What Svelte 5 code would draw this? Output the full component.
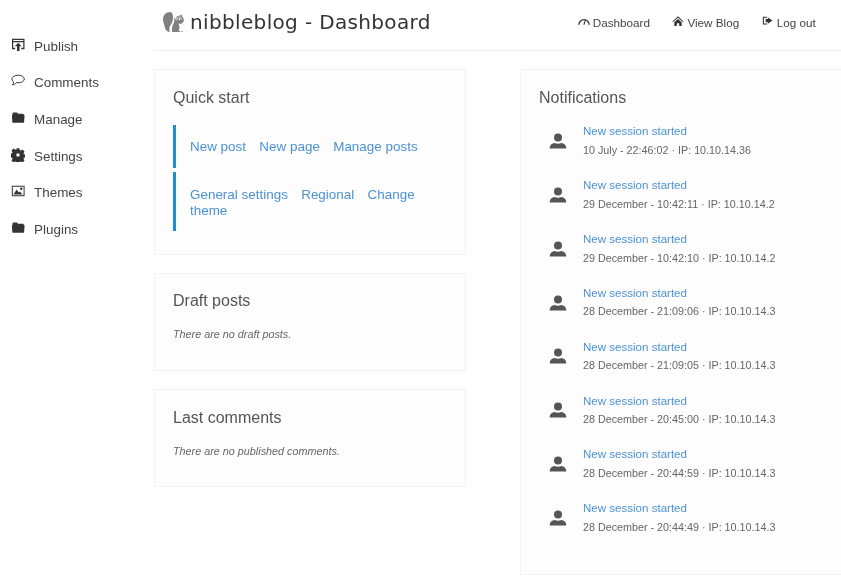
<script>
	const menu = [
		{ label: 'Publish', icon: 'publish' },
		{ label: 'Comments', icon: 'comment' },
		{ label: 'Manage', icon: 'folder' },
		{ label: 'Settings', icon: 'gear' },
		{ label: 'Themes', icon: 'image' },
		{ label: 'Plugins', icon: 'folder' }
	];

	const notifications = [
		'10 July - 22:46:02 · IP: 10.10.14.36',
		'29 December - 10:42:11 · IP: 10.10.14.2',
		'29 December - 10:42:10 · IP: 10.10.14.2',
		'28 December - 21:09:06 · IP: 10.10.14.3',
		'28 December - 21:09:05 · IP: 10.10.14.3',
		'28 December - 20:45:00 · IP: 10.10.14.3',
		'28 December - 20:44:59 · IP: 10.10.14.3',
		'28 December - 20:44:49 · IP: 10.10.14.3'
	];
</script>

{#snippet icon(name)}
	<svg class="icon" viewBox="0 0 14 14" aria-hidden="true">
		{#if name === 'publish'}
			<path d="M1 .8h12.500v10.400H10.300V9.800h2V4.200H2.200v5.600h2v1.400H1zM2.200 2v1h10.100V2z" />
			<path d="M7.200 4.800l3.300 3.500H8.500v4.700H6v-4.700H3.900z" />
		{:else if name === 'comment'}
			<path class="line" d="M7.300 1.200c3.300 0 6 1.700 6 3.800S10.600 8.800 7.300 8.800c-.7 0-1.300-.1-1.900-.2C4.600 9.900 3.100 10.700 1.500 11c.7-.8 1.100-1.700 1.100-3C1.500 7.300 1 6.300 1 5c0-2.100 3-3.800 6.300-3.800z" />
		{:else if name === 'folder'}
			<path d="M2 1.500h4l1 1.300h5.300l.7 1.400H1.500V2.500zM.9 4.200h12.700l-.5 6.900c0 .4-.3.700-.7.700H2c-.4 0-.7-.3-.7-.7z" />
		{:else if name === 'gear'}
			<path fill-rule="evenodd" d="M5.600.3h2.800l.4 1.900 1 .4 1.700-1 2 2-1 1.600.4 1 1.900.4v2.800l-1.900.4-.4 1 1 1.700-2 2-1.700-1-1 .4-.4 1.900H5.600l-.4-1.900-1-.4-1.700 1-2-2 1-1.700-.4-1-1.900-.4V5.600l1.900-.4.400-1-1-1.600 2-2 1.700 1 1 .4zM7 5.200a1.800 1.800 0 1 0 0 3.600 1.800 1.800 0 0 0 0-3.600z" />
		{:else if name === 'image'}
			<path fill-rule="evenodd" d="M.8 1.800h12.800v10.400H.8zM1.800 2.800v8.400h10.800V2.800z" />
			<path d="M2.500 10.500l3.200-5 2 3 1-1 3 3z" />
			<circle cx="10.300" cy="4.700" r="1.200" />
		{/if}
	</svg>
{/snippet}

<div class="page">
	<aside class="sidebar">
		<ul>
			{#each menu as item}
				<li>{@render icon(item.icon)}<span>{item.label}</span></li>
			{/each}
		</ul>
	</aside>

	<main class="main">
		<header class="topbar">
			<h1>
				<svg class="logo" viewBox="0 0 22 22" aria-hidden="true">
					<path d="M8.500 1C3.500 1 1 4.500 1 8.500c0 3 1.500 5 1.800 7.500.3 2.500 1.700 4.500 5.200 5.200-.9-2-.9-4-.1-6C9.500 13 11 10 11 7c0-3-.2-5-2.500-6z" />
					<path d="M12.500 6c-.2 2.500-.2 3.500-.3 5-1.500 3-3 6-2 10h7.500c.6 0 .8-.6.400-1l-1.600-.6c1-1.500 1.300-3.200.7-5-.3-.8-.6-1.300-.9-1.800 1.600.5 3 .3 4.200-.7 1.200-1 1.700-2.600 1.100-4.100-.3-1-.9-1.800-1.300-2.400L20 3.400l-1.600 1.100c-1.700-.4-3.500.3-4 1.800-.3 1-.2 2 .1 3.100-.9-.9-1.500-2.100-2-3.400z" />
					<path class="ring" d="M15 9.500c-.6-2 .6-3.700 2.400-3.700 1.500 0 2.600 1.200 2.300 2.700" />
					<circle class="eye" cx="17.600" cy="8" r=".9" />
					<path d="M19.500 20h1.300v1h-1.300z" />
				</svg>
				<span>nibbleblog - Dashboard</span>
			</h1>
			<nav>
				<span class="link">
					<svg class="icon small" viewBox="0 0 14 14" aria-hidden="true">
						<path class="line thick" d="M1 11.500A6 6 0 0 1 13 11.500" />
						<path d="M6.200 11L8.400 5l.8.300-1.500 6z" />
					</svg>Dashboard
				</span>
				<span class="link">
					<svg class="icon small" viewBox="0 0 14 14" aria-hidden="true">
						<path d="M7 1.500l6.500 6-.8.8L7 3.200 1.300 8.300l-.8-.8zM2.700 8.500L7 4.600l4.300 3.900v4.300H8.400V9.500H5.600v3.300H2.700z" />
					</svg>View Blog
				</span>
				<span class="link">
					<svg class="icon small wide" viewBox="0 0 14 14" aria-hidden="true">
						<path d="M1 1.500h5.500v1.300H2.400v7.400h4.100v1.300H1z" />
						<path d="M7.500 2.500l5.800 4-5.800 4V8.500H4.700v-4h2.800z" />
					</svg>Log out
				</span>
			</nav>
		</header>

		<div class="columns">
			<div class="left">
				<section class="box">
					<h2>Quick start</h2>
					<div class="quick">
						<a href="#a">New post</a>
						<a href="#a">New page</a>
						<a href="#a">Manage posts</a>
					</div>
					<div class="quick second">
						<a href="#a">General settings</a>
						<a href="#a">Regional</a>
						<a href="#a">Change theme</a>
					</div>
				</section>

				<section class="box draft">
					<h2>Draft posts</h2>
					<p class="empty">There are no draft posts.</p>
				</section>

				<section class="box">
					<h2>Last comments</h2>
					<p class="empty">There are no published comments.</p>
				</section>
			</div>

			<section class="box right">
				<h2>Notifications</h2>
				{#each notifications as text}
					<div class="note">
						<svg class="person" viewBox="0 0 18 18" aria-hidden="true">
							<circle cx="9" cy="5.500" r="4" />
							<path d="M.7 16.500c0-3.400 2.300-5.300 5-5.500 1.800 1 4.800 1 6.600 0 2.700.2 5 2.100 5 5.500z" />
						</svg>
						<div>
							<a href="#a">New session started</a>
							<p>{text}</p>
						</div>
					</div>
				{/each}
			</section>
		</div>
	</main>
</div>

<style>
	:global(body) {
		margin: 0;
		background: #fff;
		font-family: 'Liberation Sans', Arial, sans-serif;
		color: #444;
		overflow: hidden;
	}

	.page {
		display: flex;
		width: 841px;
		height: 576px;
		overflow: hidden;
		will-change: opacity;
	}

	.sidebar {
		flex: 0 0 154px;
	}

	.sidebar ul {
		list-style: none;
		margin: 0;
		padding: 28px 0 0 11px;
	}

	.sidebar li {
		display: flex;
		align-items: center;
		height: 36.600px;
		font-size: 13.440px;
		color: #444;
	}

	.sidebar li span {
		margin-left: 9px;
	}

	.icon {
		width: 14px;
		height: 14px;
		fill: #333;
		flex: none;
		margin-top: -3px;
	}

	.icon .line {
		fill: none;
		stroke: #333;
		stroke-width: 1;
	}

	.icon .line.thick {
		stroke-width: 1.500;
	}

	.icon.small {
		width: 12px;
		height: 12px;
		margin: 0 3px 0 0;
		vertical-align: -0.500px;
	}

	.icon.small.wide {
		width: 11px;
		margin-right: 4px;
	}

	.main {
		flex: 1;
		min-width: 0;
	}

	.topbar {
		display: flex;
		justify-content: space-between;
		align-items: center;
		height: 44px;
		padding-bottom: 6px;
		border-bottom: 1px solid #eee;
	}

	h1 {
		display: flex;
		align-items: center;
		margin: 0 0 0 8px;
		font: 400 20px 'DejaVu Sans', sans-serif;
		letter-spacing: 0.350px;
		color: #333;
	}

	.logo {
		width: 22px;
		height: 22px;
		fill: #808080;
		margin-right: 6px;
	}

	.logo .eye {
		fill: #fff;
	}

	.logo .ring {
		fill: none;
		stroke: #e4e4e4;
		stroke-width: 0.800;
	}

	nav {
		display: flex;
		gap: 22.500px;
		margin-right: 25.300px;
		font-size: 11.700px;
		color: #444;
	}

	.link {
		white-space: nowrap;
	}

	.columns {
		display: flex;
		gap: 54px;
		margin-top: 18px;
		align-items: flex-start;
	}

	.left {
		flex: 0 0 312px;
		display: flex;
		flex-direction: column;
		gap: 18px;
	}

	.box {
		box-sizing: border-box;
		background: #fdfdfd;
		border: 1px solid #f3f3f3;
		padding: 17px 18px 18px;
	}

	.draft {
		padding-top: 16px;
		padding-bottom: 19px;
	}

	.right {
		flex: 1;
		height: 506px;
		border-right: none;
	}

	h2 {
		margin: 0;
		font-size: 16px;
		font-weight: 400;
		line-height: 22px;
		color: #555;
	}

	.quick {
		margin-top: 4px;
		border-left: 3px solid #1f8dd6;
		padding: 13.500px 14px;
		font-size: 13.440px;
		line-height: 16px;
	}

	.quick.second {
		padding: 15px 14px 12px;
	}

	h2 + .quick {
		margin-top: 16px;
	}

	a {
		color: #4b92d3;
		text-decoration: none;
	}

	.quick a {
		margin-right: 9.600px;
	}

	.empty {
		margin: 16px 0 0;
		padding-bottom: 10px;
		font-size: 10.800px;
		font-style: italic;
		line-height: 13px;
		color: #666;
	}

	.left .box:first-child {
		padding-bottom: 23px;
	}

	.note {
		display: flex;
		align-items: center;
		margin: 0 0 0 10px;
		height: 53.850px;
		font-size: 11.550px;
	}

	h2 + .note {
		margin-top: 4.700px;
	}

	.note p {
		margin: 4.500px 0 0;
		color: #666;
		line-height: 14px;
		font-size: 10.750px;
	}

	.note a {
		line-height: 14px;
		display: block;
	}

	.person {
		width: 18px;
		height: 18px;
		fill: #555;
		margin: 1px 16px 0 0;
	}
</style>
